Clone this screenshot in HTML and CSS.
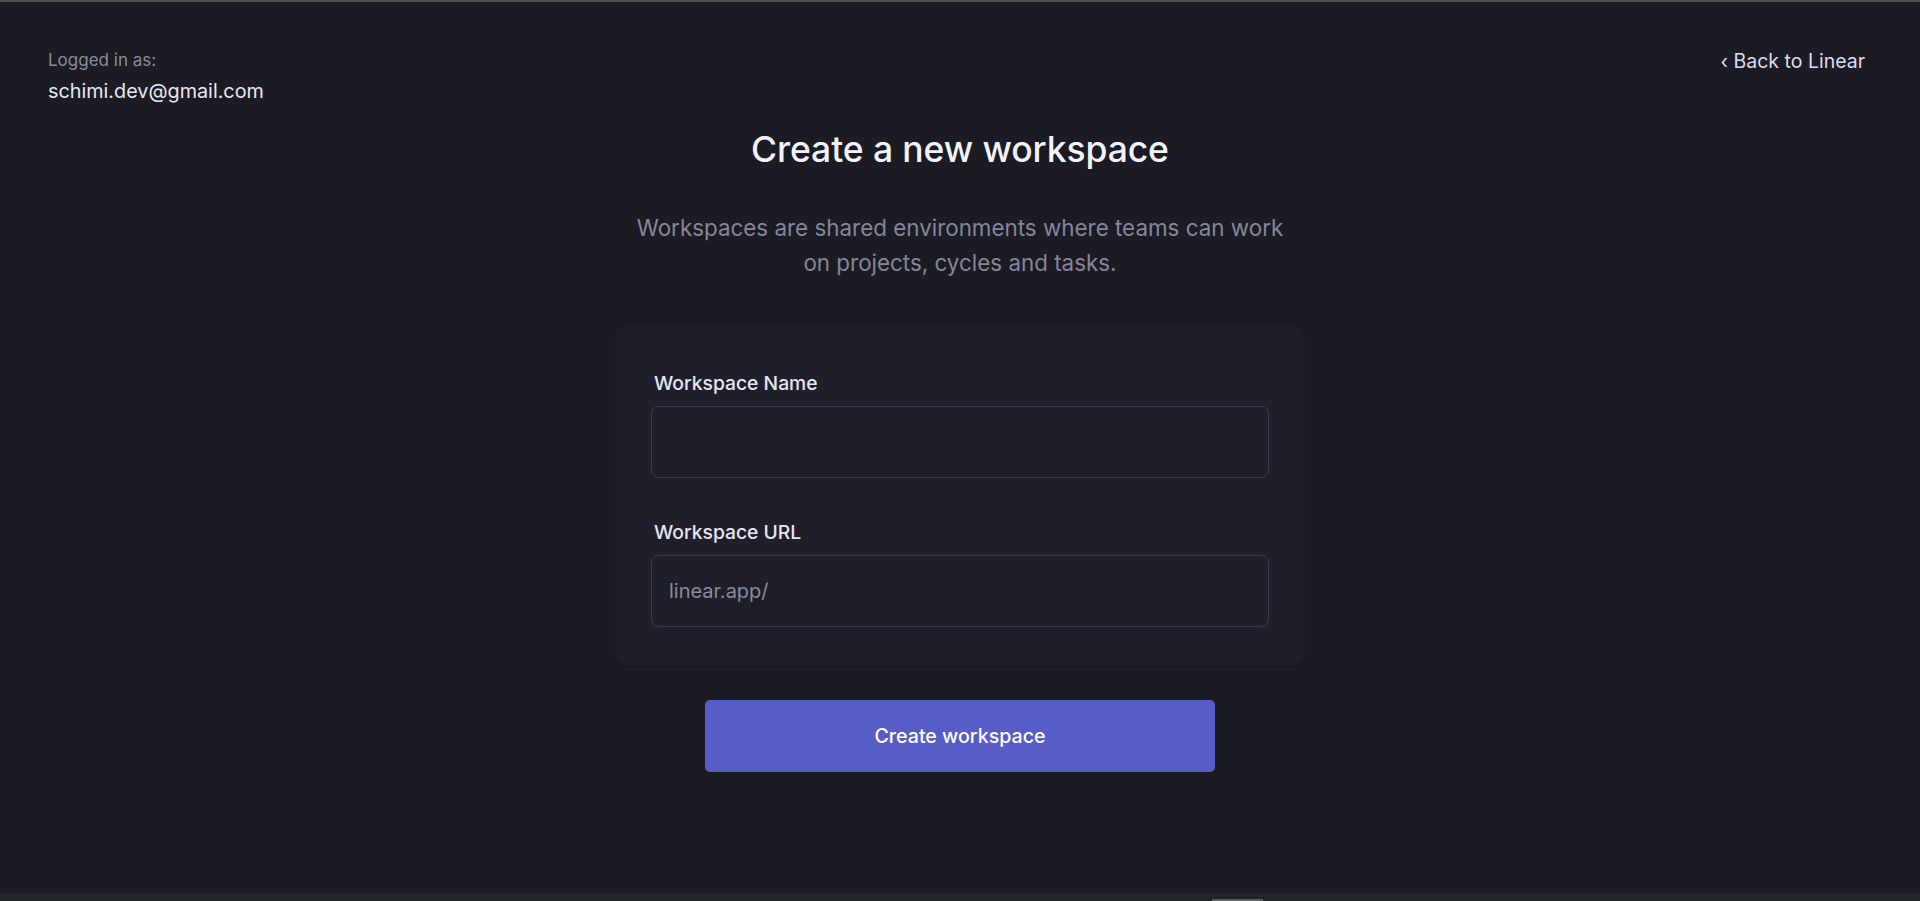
FILE: index.html
```html
<!DOCTYPE html>
<html lang="en">
<head>
<meta charset="utf-8">
<title>Create a new workspace</title>
<link rel="stylesheet" href="styles.css">
</head>
<body>
<div class="page">
  <header class="header">
    <div class="account">
      <div class="account-label">Logged in as:</div>
      <div class="account-email">schimi.dev@gmail.com</div>
    </div>
    <a class="back-link" href="#">‹ Back to Linear</a>
  </header>
  <main class="main">
    <h1 class="title">Create a new workspace</h1>
    <p class="subtitle">Workspaces are shared environments where teams can work on projects, cycles and tasks.</p>
    <form class="card">
      <label class="field-label" for="ws-name">Workspace Name</label>
      <input class="field-input" id="ws-name" type="text">
      <label class="field-label field-label--spaced" for="ws-url">Workspace URL</label>
      <div class="field-input field-input--url">linear.app/</div>
    </form>
    <button class="primary-btn" type="button">Create workspace</button>
  </main>
  <footer class="bottom-strip"><span class="bottom-handle"></span></footer>
</div>
</body>
</html>
```
FILE: styles.css
```css
* { box-sizing: border-box; }
html, body { margin: 0; padding: 0; }
body {
  background: #1b1b23;
  font-family: Inter, "Noto Sans", "Liberation Sans", sans-serif;
  color: #e6e6f0;
}
.page {
  min-height: 901px;
  display: flex;
  flex-direction: column;
  border-top: 2px solid #4d4d4f;
}
.header {
  display: flex;
  justify-content: space-between;
  align-items: flex-start;
  padding: 46px 55px 0 48px;
}
.account-label {
  font-size: 17px;
  line-height: 24px;
  color: #8a8b9e;
}
.account-email {
  margin-top: 5px;
  font-size: 19.8px;
  line-height: 28px;
  font-weight: 400;
  color: #e8e8f4;
}
.back-link {
  font-size: 19.5px;
  line-height: 26px;
  color: #dcdcf0;
  text-decoration: none;
  font-weight: 400;
}
.main {
  display: flex;
  flex-direction: column;
  align-items: center;
}
.title {
  margin: 23px 0 0;
  font-size: 35.5px;
  line-height: 44px;
  font-weight: 500;
  color: #f2f2fa;
  letter-spacing: -0.1px;
}
.subtitle {
  margin: 38px 0 0;
  max-width: 670px;
  text-align: center;
  font-size: 22.4px;
  line-height: 35px;
  color: #858699;
}
.card {
  margin-top: 46px;
  width: 690px;
  padding: 45px 36px 38px;
  background: #1f1f2a;
  border-radius: 12px;
  display: flex;
  flex-direction: column;
}
.field-label {
  font-size: 19.3px;
  line-height: 24px;
  font-weight: 500;
  color: #e6e6f2;
  padding-left: 3px;
}
.field-label--spaced { margin-top: 42px; }
.field-input {
  margin-top: 11px;
  height: 72px;
  width: 100%;
  background: #1e1e29;
  border: 1px solid #3a374f;
  border-radius: 8px;
  font: inherit;
  font-size: 20px;
  color: #e6e6f2;
  padding: 0 17px;
  outline: none;
}
.field-input--url {
  display: flex;
  align-items: center;
  color: #8a8b9e;
}
.primary-btn {
  margin-top: 35px;
  width: 510px;
  height: 72px;
  border: none;
  border-radius: 5px;
  background: #585cc7;
  color: #ffffff;
  font-family: inherit;
  font-size: 19.6px;
  font-weight: 500;
  cursor: pointer;
}
.bottom-strip {
  margin-top: auto;
  height: 8px;
  background: #1e2427;
  position: relative;
}
.bottom-handle {
  position: absolute;
  left: 1212px;
  bottom: 0;
  width: 51px;
  height: 2px;
  background: #5a5e62;
}
```
